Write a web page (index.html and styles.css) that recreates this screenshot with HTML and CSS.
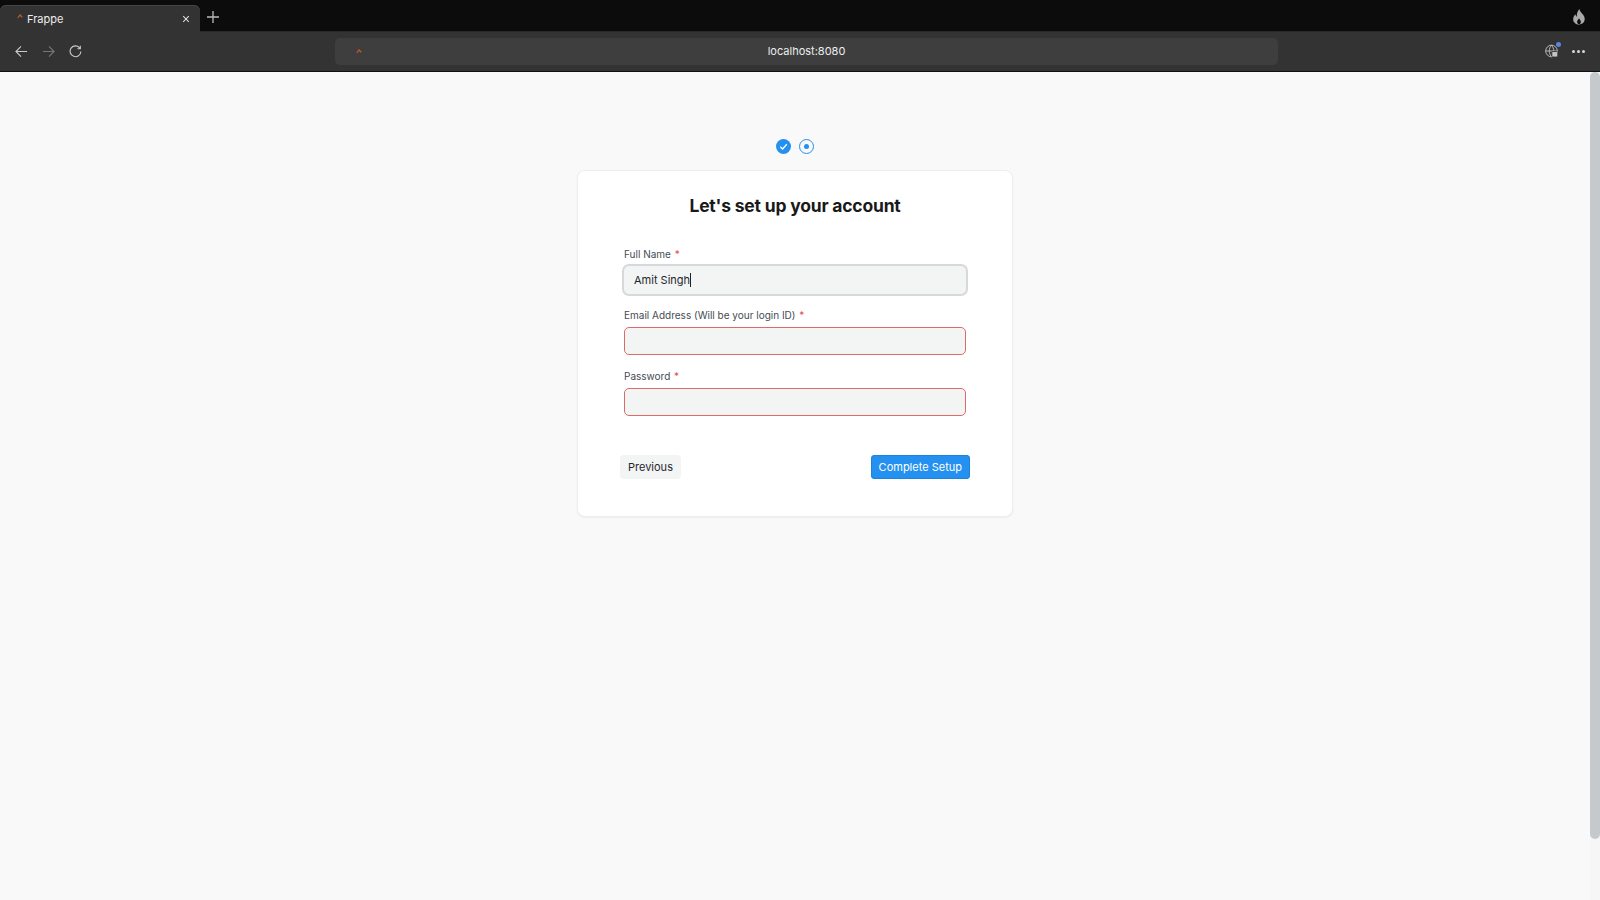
FILE: index.html
```html
<!DOCTYPE html>
<html lang="en">
<head>
    <meta charset="utf-8">
    <title>Frappe</title>
    <link rel="stylesheet" href="styles.css">
</head>
<body>
<header class="browser">
    <div class="tabstrip">
        <div class="tab">
            <svg class="favicon" viewBox="0 0 8 6"><path d="M1 5 4 1l3 3" fill="none" stroke="#c8582c" stroke-width="1.6"/></svg>
            <span class="tab-title">Frappe</span>
            <svg class="tab-close" viewBox="0 0 10 10"><path d="M1.5 1.5l7 7M8.5 1.5l-7 7"/></svg>
        </div>
        <svg class="new-tab" viewBox="0 0 12 12"><path d="M6 0v12M0 6h12"/></svg>
        <svg class="flame" viewBox="0 0 14 16"><path d="M7.4 0c.5 2.6 2 3.6 3.5 5.6 1 1.400 1.800 2.700 1.800 4.500 0 3.300-2.500 5.400-5.700 5.400S1.200 13.400 1.200 10.200c0-2 .9-3.700 2.300-5 .1 1.200.5 2 1.300 2.600C4.700 4.800 5.400 2 7.400 0zM7 9.500c-1 1.200-1.900 2.200-1.900 3.500 0 .8.400 1.500 1 1.900h1.800c.7-.4 1-1.100 1-1.900 0-1.300-1-2.300-1.900-3.500z" fill-rule="evenodd"/></svg>
    </div>
    <div class="toolbar">
        <div class="nav-btns">
            <svg class="nav-icon" viewBox="0 0 14 14"><path d="M13 7H1.500M6.500 1.500 1 7l5.500 5.500"/></svg>
            <svg class="nav-icon off" viewBox="0 0 14 14"><path d="M1 7h11.500M7.500 1.500 13 7l-5.500 5.500"/></svg>
            <svg class="nav-icon" viewBox="0 0 14 14"><path d="M11.800 3.500A5.800 5.800 0 1 0 12.800 7M12.200.8v3.200H9"/></svg>
        </div>
        <div class="urlbar">
            <svg class="favicon" viewBox="0 0 8 6"><path d="M1 5 4 1l3 3" fill="none" stroke="#c8582c" stroke-width="1.6"/></svg>
            <span class="url">localhost:8080</span>
        </div>
        <div class="tools">
            <span class="vpn">
                <svg class="globe" viewBox="0 0 14 14">
                    <circle cx="6.500" cy="7" r="5.800"/>
                    <path d="M.7 7h11.600M6.500 1.200c-3 3.500-3 8 0 11.600M6.500 1.200c3 3.500 3 8 0 11.600"/>
                    <rect class="lock" x="6.800" y="7.500" width="6" height="5.500" rx="1"/>
                </svg>
                <i class="vpn-dot"></i>
            </span>
            <span class="menu-dots"><i></i><i></i><i></i></span>
        </div>
    </div>
</header>
<div class="viewport">
    <main class="page">
        <div class="steps">
            <span class="step done">
                <svg viewBox="0 0 15 15"><path d="M4.300 7.800l2.300 2.200 4.200-4.700"/></svg>
            </span>
            <span class="step current"><i></i></span>
        </div>
        <form class="card">
            <h1>Let's set up your account</h1>
            <div class="field">
                <label>Full Name <abbr>*</abbr></label>
                <div class="input focused"><span>Amit Singh</span><i class="caret"></i></div>
            </div>
            <div class="field">
                <label>Email Address (Will be your login ID) <abbr>*</abbr></label>
                <div class="input invalid"></div>
            </div>
            <div class="field">
                <label>Password <abbr>*</abbr></label>
                <div class="input invalid"></div>
            </div>
            <div class="actions">
                <button type="button" class="btn">Previous</button>
                <button type="button" class="btn primary">Complete Setup</button>
            </div>
        </form>
    </main>
    <div class="scrollbar"><div class="thumb"></div></div>
</div>
</body>
</html>
```

FILE: styles.css
```css
* {
    box-sizing: border-box;
}
html, body {
    height: 100%;
}
body {
    margin: 0;
    display: flex;
    flex-direction: column;
    overflow: hidden;
    background: #f9f9f9;
    color: #1f272e;
    font-family: Inter, "Liberation Sans", sans-serif;
}

/* Browser chrome */
.browser {
    flex: none;
    height: 72px;
    border-bottom: 1px solid #111;
    background: #333;
}
.tabstrip {
    display: flex;
    align-items: flex-start;
    height: 32px;
    padding-top: 5px;
    background: #0c0c0c;
    border-bottom: 1px solid #2a2a2a;
}
.tab {
    display: flex;
    align-items: center;
    width: 200px;
    height: 27px;
    padding: 0 10px 0 17px;
    border-radius: 6px 6px 0 0;
    background: #333;
    box-shadow: inset 0 1px 0 #444;
    position: relative;
    z-index: 1;
}
.tab .favicon {
    margin-top: -4px;
}
.favicon {
    width: 6px;
    height: 5px;
    flex: none;
}
.tab-title {
    flex: 1;
    margin-left: 4px;
    color: #eee;
    font-size: 11px;
}
.tab-close {
    width: 8px;
    height: 8px;
    fill: none;
    stroke: #ddd;
    stroke-width: 1.300;
}
.new-tab {
    width: 12px;
    height: 12px;
    margin: 6px 0 0 7px;
    fill: none;
    stroke: #bbb;
    stroke-width: 1.300;
}
.flame {
    width: 14px;
    height: 16px;
    margin: 4px 14px 0 auto;
    fill: #a9a9a9;
}
.toolbar {
    display: flex;
    align-items: center;
    height: 39px;
    padding: 0 15px 1px 15px;
}
.nav-btns {
    display: flex;
    gap: 14px;
    width: 320px;
}
.nav-icon {
    width: 13px;
    height: 13px;
    fill: none;
    stroke: #c9c9c9;
    stroke-width: 1.200;
}
.nav-icon.off {
    stroke: #777;
}
.urlbar {
    display: flex;
    align-items: center;
    position: relative;
    width: 943px;
    height: 27px;
    padding-left: 21px;
    border-radius: 5px;
    background: #3e3e3e;
}
.url {
    position: absolute;
    left: 0;
    right: 0;
    text-align: center;
    color: #eee;
    font-size: 11px;
}
.tools {
    display: flex;
    align-items: center;
    gap: 13px;
    margin-left: auto;
}
.vpn {
    display: block;
    position: relative;
    width: 14px;
    height: 14px;
}
.globe {
    display: block;
    fill: none;
    stroke: #c4c4c4;
    stroke-width: 0.900;
}
.globe .lock {
    fill: #c4c4c4;
    stroke: #333;
}
.vpn-dot {
    position: absolute;
    top: -2px;
    right: -2px;
    width: 5px;
    height: 5px;
    border-radius: 50%;
    background: #5a86e0;
}
.menu-dots {
    display: flex;
    gap: 2px;
}
.menu-dots i {
    width: 3px;
    height: 3px;
    border-radius: 50%;
    background: #d8d8d8;
}

/* Page */
.viewport {
    flex: 1;
    display: flex;
    min-height: 0;
}
.page {
    flex: 1;
    display: flex;
    flex-direction: column;
    align-items: center;
    padding-top: 67px;
}
.scrollbar {
    flex: none;
    width: 10px;
    background: #f6f6f6;
}
.thumb {
    height: 767px;
    border-radius: 5px;
    background: #c6c9cc;
}
.steps {
    display: flex;
    gap: 8px;
    margin-bottom: 16px;
}
.step {
    display: flex;
    align-items: center;
    justify-content: center;
    width: 15px;
    height: 15px;
    border-radius: 50%;
}
.step.done {
    background: #2490ef;
}
.step.done svg {
    width: 15px;
    height: 15px;
    fill: none;
    stroke: #fff;
    stroke-width: 1.300;
}
.step.current {
    border: 1px solid #2490ef;
}
.step.current i {
    width: 5px;
    height: 5px;
    border-radius: 50%;
    background: #2490ef;
}

/* Card */
.card {
    width: 436px;
    height: 347px;
    padding: 23px 46px 0;
    border: 1px solid #eeeeee;
    border-radius: 8px;
    background: #fff;
    box-shadow: 0 1px 2px rgba(0, 0, 0, 0.05);
}
h1 {
    margin: 0 0 27px;
    text-align: center;
    color: #1a1a1a;
    font-size: 17.500px;
    font-weight: 700;
    letter-spacing: -0.2px;
    line-height: 24px;
}
.field {
    margin-bottom: 12px;
}
label {
    display: block;
    height: 21px;
    padding-top: 1px;
    color: #444c54;
    font-size: 10px;
    line-height: 16px;
}
abbr {
    margin-left: 1px;
    color: #e24c4c;
}
.input {
    display: flex;
    align-items: center;
    height: 28px;
    padding: 0 10px;
    border-radius: 5px;
    background: #f3f4f4;
    color: #1f272e;
    font-size: 11px;
}
.input.focused {
    box-shadow: 0 0 0 2px #d6d9dc;
}
.input.invalid {
    border: 1px solid #dc6a6a;
}
.caret {
    width: 1px;
    height: 14px;
    background: #222;
}
.actions {
    display: flex;
    justify-content: space-between;
    margin: 39px -4px 0;
}
.btn {
    height: 24px;
    padding: 0 8px;
    border: none;
    border-radius: 4px;
    background: #f3f4f4;
    color: #1f272e;
    font: 11px Inter, "Liberation Sans", sans-serif;
}
.btn.primary {
    background: #2490ef;
    color: #fff;
    box-shadow: inset 0 0 0 1px #1f83dc;
}
```
